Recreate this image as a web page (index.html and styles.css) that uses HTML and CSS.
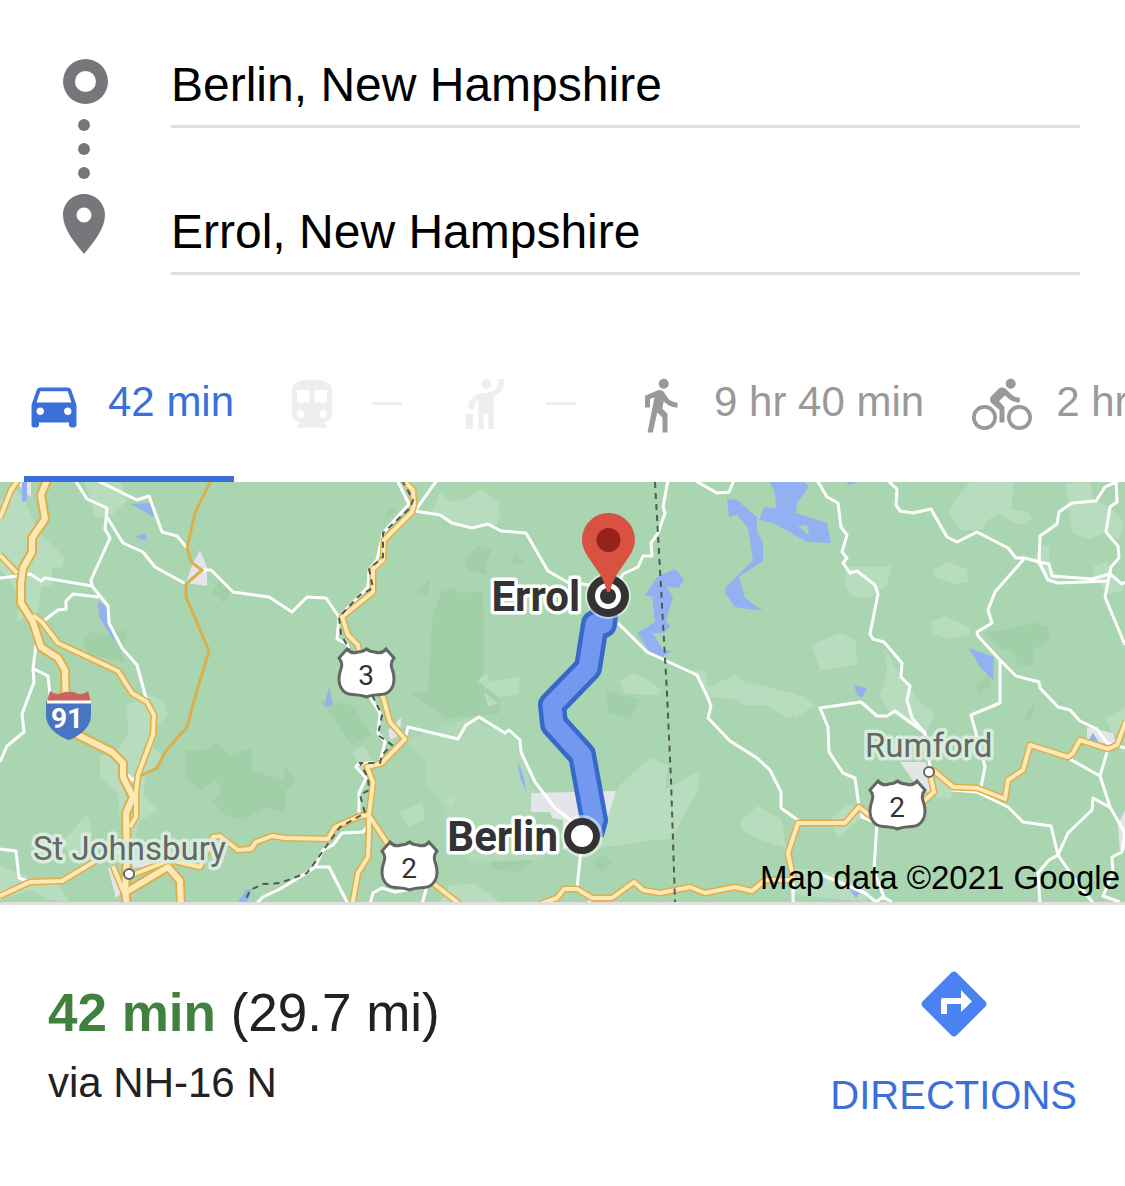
FILE: index.html
```html
<!DOCTYPE html>
<html lang="en">
<head>
    <meta charset="utf-8">
    <meta name="viewport" content="width=device-width, initial-scale=1">
    <title>Berlin to Errol - directions</title>
    <link rel="stylesheet" href="styles.css">
</head>
<body>
    <form class="search">
        <svg class="stops" viewBox="60 56 50 219" aria-hidden="true">
            <path fill-rule="evenodd" d="M85.500 59a22.500 22.500 0 1 0 0 45a22.500 22.500 0 1 0 0-45zM85.500 71a10.500 10.500 0 1 1 0 21a10.500 10.500 0 1 1 0-21z"/>
            <circle cx="84" cy="125" r="6"/>
            <circle cx="84" cy="149" r="6"/>
            <circle cx="84" cy="173" r="6"/>
            <path fill-rule="evenodd" d="M84 194c-11.600 0-21 9.300-21 21c0 14 12 28 21 39c9-11 21-25 21-39c0-11.700-9.400-21-21-21zM84 207.500a7.500 7.500 0 1 1 0 15a7.500 7.500 0 1 1 0-15z"/>
        </svg>
        <div class="fields">
            <input type="text" value="Berlin, New Hampshire" aria-label="Starting point">
            <input type="text" value="Errol, New Hampshire" aria-label="Destination">
        </div>
    </form>

    <nav class="modes">
        <button class="mode active" type="button" aria-label="Driving, 42 min">
            <svg viewBox="0 0 24 24"><path d="M18.920 6.010C18.720 5.420 18.160 5 17.500 5h-11c-.66 0-1.210.42-1.420 1.010L3 12v8c0 .55.45 1 1 1h1c.55 0 1-.45 1-1v-1h12v1c0 .55.45 1 1 1h1c.55 0 1-.45 1-1v-8l-2.080-5.990zM6.500 16c-.83 0-1.500-.67-1.500-1.500S5.670 13 6.500 13s1.500.67 1.500 1.500S7.330 16 6.500 16zm11 0c-.83 0-1.500-.67-1.500-1.500s.67-1.500 1.500-1.500 1.500.67 1.500 1.500-.67 1.500-1.500 1.500zM5 11l1.500-4.500h11L19 11H5z"/></svg>
            <span>42 min</span>
        </button>
        <button class="mode off" type="button" aria-label="Transit">
            <svg viewBox="0 0 24 24"><path d="M12 2c-4.420 0-8 .5-8 4v9.500C4 17.430 5.570 19 7.500 19L6 20.500v.5h12v-.5L16.500 19c1.930 0 3.500-1.570 3.500-3.500V6c0-3.500-3.580-4-8-4zM7.500 17c-.83 0-1.500-.67-1.500-1.500S6.670 14 7.500 14s1.500.67 1.500 1.500S8.330 17 7.500 17zm3.500-6H6V6h5v5zm5.500 6c-.83 0-1.500-.67-1.500-1.500s.67-1.500 1.500-1.500 1.500.67 1.500 1.500-.67 1.500-1.500 1.500zm1.500-6h-5V6h5v5z"/></svg>
            <span>—</span>
        </button>
        <button class="mode off" type="button" aria-label="Ride service">
            <svg viewBox="0 0 60 60"><circle cx="30" cy="9" r="5"/><path d="M42.300 4H48v5C48 14 43 19.500 37.700 21.500V54h-5.400V39h-4.600v15h-5.400V24.500C19.500 26 18 30 18 34h-5.700C12.300 24 19 18.500 28 18C36 17.500 42.300 14 42.300 8zM9.700 39H17v15H9.700z"/></svg>
            <span>—</span>
        </button>
        <button class="mode" type="button" aria-label="Walking, 9 hr 40 min">
            <svg viewBox="0 0 24 24"><path d="M13.500 5.500c1.100 0 2-.9 2-2s-.9-2-2-2-2 .9-2 2 .9 2 2 2zM9.800 8.900L7 23h2.100l1.800-8 2.100 2v6h2v-7.500l-2.100-2 .6-3C14.800 12 16.800 13 19 13v-2c-1.900 0-3.500-1-4.300-2.400l-1-1.600c-.4-.6-1-1-1.700-1-.3 0-.5.1-.8.1L6 8.300V13h2V9.600l1.800-.7"/></svg>
            <span>9 hr 40 min</span>
        </button>
        <button class="mode" type="button" aria-label="Cycling, 2 hr">
            <svg viewBox="0 0 24 24"><path d="M15.500 5.500c1.100 0 2-.9 2-2s-.9-2-2-2-2 .9-2 2 .9 2 2 2zM5 12c-2.800 0-5 2.200-5 5s2.200 5 5 5 5-2.200 5-5-2.200-5-5-5zm0 8.500c-1.900 0-3.500-1.600-3.500-3.500s1.600-3.500 3.500-3.500 3.500 1.600 3.500 3.500-1.600 3.500-3.500 3.500zm5.800-10l2.400-2.400.8.8c1.300 1.300 3 2.100 5.100 2.100V9c-1.500 0-2.700-.6-3.600-1.500l-1.900-1.900c-.5-.4-1-.6-1.600-.6s-1.100.2-1.400.6L7.800 8.400c-.4.4-.6.9-.6 1.400 0 .6.2 1.100.6 1.400L11 14v5h2v-6.200l-2.200-2.300zM19 12c-2.800 0-5 2.200-5 5s2.200 5 5 5 5-2.200 5-5-2.200-5-5-5zm0 8.500c-1.900 0-3.500-1.600-3.500-3.500s1.600-3.500 3.500-3.500 3.500 1.600 3.500 3.500-1.600 3.500-3.500 3.500z"/></svg>
            <span>2 hr</span>
        </button>
    </nav>

    <div class="map">
        <svg viewBox="0 482 1125 420">
            <defs>
                <path id="us" d="M9 0C12 4 16 4.500 20 3C23 3 26 2 28.500 0C31 2 34 3 37 3C41 4.500 45 4 48 0L56 9C52 14 53 17 55 23C58 34 54 45 43 45.500C37 46 32 46 28.500 48C25 46 20 46 14 45.500C3 45 -1 34 2 23C4 17 5 14 1 9Z"/>
                <!-- drawn twice: casing first, then the lighter centre -->
                <g id="freeway">
                    <path d="M47 480L41 495L45 519L32 538L32 552L23 568L21 583L21 603L33 622L41 647L58 658L65 670L66 725L78 735L112 752L123 763L123 777L133 797L126 813L127 857L125 890L127 906"/>
                    <path d="M126 892L168 867L180 881L181 906"/>
                </g>
                <g id="highway">
                    <path d="M18 480L11 490L0 518M0 555L17 573M33 615L42 622L58 643L118 671L132 693L147 702L154 715L153 735L138 775L136 793L136 817L130 827"/>
                    <path d="M0 896L30 882L62 881L97 860L127 848M113 866L124 893M127 877L170 860L200 867L213 837L220 836L238 850L251 849L256 842L272 836L285 838L328 839L335 827L360 816L369 815"/>
                    <path d="M403 480L413 490L414 505L412 512L384 540L383 560L373 569L373 592L342 617L348 635L358 645L360 660L378 690L383 697L390 722L405 739L382 763L367 767L373 782L369 815L369 835L368 857L358 873L352 906M370 817L387 843L433 883L462 906"/>
                    <path d="M540 904L557 898L564 889L577 889L592 898L612 898L634 882L643 890L660 893L690 887L705 893L735 887L752 891L765 880L792 880L793 877L788 853L798 823L845 823L859 807L872 817L923 802L934 792L931 778L933 770L953 787L977 788L1005 799L1008 780L1023 770L1030 745L1068 757L1073 753L1080 740L1108 749L1117 745L1126 721"/>
                </g>
            </defs>

            <rect x="0" y="482" width="1125" height="420" fill="#a9d5b0"/>

            <g class="forest">
                <path d="M441 592L452 588L462 593L483 592L484 690L500 688L499 714L445 718L412 694L428 690L432 620Z"/>
                <path d="M465 558L478 545L492 550L485 564L487 575L467 570ZM509 564L516 556L526 563ZM418 592L430 578L428 596Z"/>
                <path d="M185 750L205 750L216 741L230 755L252 748L252 770L285 782L285 812L265 808L242 820L225 815L212 802L222 790L215 778L208 785L200 790L186 777Z"/>
                <path d="M82 643L90 631L102 636L127 630L121 652L125 662L90 655ZM212 593L220 578L232 590L224 603Z"/>
                <path d="M984 632L1020 627L1032 622L1048 627L1049 640L1032 650L1035 665L1018 665L1015 653L1000 648ZM977 685L990 672L990 685L978 693Z"/>
                <path d="M387 510L398 508L384 522ZM285 765L296 782L284 792ZM605 690L640 700L630 720L608 712ZM1022 722L1036 700L1032 718Z"/>
                <path d="M593 863L605 855L612 862L603 874ZM490 855L515 846L535 860L520 872L493 870ZM320 700L352 705L372 735L352 745L340 728Z"/>
            </g>
            <path d="M405 740L440 728L470 718L505 733L520 742L530 785L556 812L535 815L545 860L470 862L450 840L440 800L425 785L425 760Z" fill="#b1d9b8"/>
            <g class="meadow">
                <path d="M0 500L17 490L25 500L37 530L65 558L62 568L52 567L52 585L42 587L37 613L16 622L20 600L10 580L0 570ZM85 482L120 482L127 500L112 515L95 518L91 500Z"/>
                <path d="M127 705L150 695L165 702L168 715L158 725L153 748L165 757L145 778L144 796L158 810L138 822L132 860L120 820L118 795L100 775L100 755L118 750L128 735Z"/>
                <path d="M62 842L87 815L92 830L90 850L70 855ZM0 866L25 875L35 885L55 880L70 902L50 900L30 890L0 900Z"/>
                <path d="M432 511L440 493L452 502L464 500L482 489L498 502L501 516L496 525L472 528L452 523Z"/>
                <path d="M352 752L364 745L372 762L362 775ZM443 802L455 796L453 807ZM400 812L422 802L425 820L408 827Z"/>
                <path d="M620 680L633 674L645 678L662 690L658 695L625 694ZM690 670L706 672L708 687L735 675L745 683L760 685L805 697L815 705L788 718L766 705L742 700L710 697Z"/>
                <path d="M811 645L840 633L856 640L857 665L820 670ZM845 567L885 567L892 563L887 585L870 598L852 596L845 585ZM933 570L948 562L967 569L968 582L955 584L935 577ZM930 622L945 616L970 628L969 634L950 639L933 634Z"/>
                <path d="M970 482L1013 482L1012 510L1027 511L1032 518L1026 525L1016 524L998 513L986 522L982 530L960 530L948 512L955 500Z"/>
                <path d="M1065 484L1090 482L1094 500L1110 507L1124 522L1119 540L1106 532L1090 539L1073 534L1069 510ZM1094 566L1108 562L1115 580L1125 590L1108 594L1094 576ZM1040 545L1050 546L1049 565L1060 580L1048 580L1034 560Z"/>
                <path d="M884 648L894 665L918 700L935 715L925 735L890 712L880 697L887 672ZM740 690L790 692L815 705L795 718L785 705L740 705Z"/>
                <path d="M740 820L758 806L782 820L786 848L760 840L742 830ZM830 820L848 805L870 812L850 827L838 838ZM1105 718L1125 708L1125 735L1112 733ZM790 868L830 872L870 890L865 902L790 894Z"/>
                <path d="M606 812L620 785L650 758L668 765L665 790L700 770L698 790L672 838L640 842L600 848ZM450 885L475 884L500 902L440 902ZM935 770L955 788L950 799L936 798ZM478 681L486 673L491 682L520 676L518 694L498 697ZM484 692L498 703L488 707Z"/>
            </g>
            <g class="town">
                <path d="M200 550L207 567L207 586L186 583L192 565ZM17 482L31 482L31 497L24 492ZM108 868L115 867L121 893L116 898Z"/>
                <path d="M531 793L616 791L602 835L563 850L563 820L552 818L550 812L531 812ZM401 718L400 735L390 740L388 730Z"/>
                <path d="M900 762L925 762L932 773L935 790L922 793ZM1087 727L1113 733L1117 745L1102 743L1087 740ZM1125 810L1118 825L1120 850L1125 850ZM130 860L165 855L150 866L134 868Z"/>
            </g>
            <g class="water">
                <path d="M131 504L150 503L154 517ZM135 537L145 533L147 541ZM98 601L107 607L109 623L116 643L99 617ZM22 482L27 482L27 501L22 502Z"/>
                <path fill-rule="evenodd" d="M770 482L805 482L809 487L797 503L796 513L827 523L831 543L807 542L773 523L759 520L764 507L776 508L775 493ZM798 526L807 525L809 536Z"/>
                <path d="M727 499L737 500L757 517L757 530L763 543L763 561L739 577L745 598L763 611L735 607L725 593L726 587L753 560L748 528L737 515L729 517Z"/>
                <path d="M657 577L675 569L684 579L679 588L667 587L673 598L666 620L670 627L663 633L653 633L663 650L672 651L662 657L650 652L637 633L655 622L652 597L645 595Z"/>
                <path d="M969 648L994 657L993 680L980 667ZM854 685L867 688L862 698L857 695ZM329 687L333 705L324 707ZM517 761L523 773L527 793L521 780ZM252 889L246 890L238 902L247 902ZM1093 733L1099 742L1088 741ZM848 888L860 893L856 898ZM846 482L858 482L849 485Z"/>
            </g>

            <g class="road">
                <path d="M75 480L87 499L107 508L105 529L110 538L91 580L92 586L108 606L109 623L122 648L137 665L147 702M107 517L123 543L143 552L155 567L186 584"/>
                <path d="M96 480L137 500L149 496L162 532L177 536L187 548M0 578L17 576L30 574L41 581L45 578L92 586M42 622L58 610L66 609L66 601L73 594L99 597"/>
                <path d="M36 645L33 669L34 682L22 714L24 732L7 746L0 762M34 669L48 676L50 695M202 570L211 570L233 592L269 597L292 612L307 597L326 598L339 617"/>
                <path d="M397 480L409 504L383 533L377 560L369 570L368 587L339 617L337 639L347 644L352 655M437 480L415 511L440 515L452 523L472 528L488 524L501 531L526 533L548 571L567 582L590 585"/>
                <path d="M370 697L380 713L378 733L385 742L380 762L358 764L356 767L366 778L359 793L359 815M370 823L363 832L342 833L333 845L323 850L315 867L308 872L280 889L263 897L256 904M315 867L329 867L348 904"/>
                <path d="M405 739L408 727L458 739L466 725L479 717L505 733L509 730L520 740L521 752L535 782L555 808L573 822M581 850L577 888M370 904L373 893L382 888L395 892L412 889M422 904L427 886M590 898L590 904"/>
                <path d="M0 849L16 851L19 878L30 882M128 775L132 780L138 776"/>
                <path d="M668 480L663 507L665 513L658 533L651 543L652 556L643 556L638 567L623 574L618 583M694 480L717 493L729 492L734 480M618 623L647 652L697 675L708 698L711 706L708 718L730 741L757 758L770 770L781 792L781 808L799 821"/>
                <path d="M817 480L827 497L838 503L841 527L847 535L842 552L847 558L843 563L850 573L857 571L875 585L878 594L870 634L873 639L884 642L902 663L901 677L910 686L907 700L912 718L925 733L930 767"/>
                <path d="M887 480L897 489L896 505L900 511L913 513L931 509L947 537L957 542L977 532L1008 548L1016 558L1025 558L1039 562L1049 564L1052 576L1092 579L1110 574L1122 584L1125 582M1039 562L1048 580L1058 583L1108 581"/>
                <path d="M1120 480L1105 487L1096 501L1072 503L1059 512L1057 524L1040 536L1039 562M1116 480L1117 502L1110 507L1106 532L1118 546L1119 558L1111 567L1105 597L1125 645"/>
                <path d="M1024 559L995 592L988 610L992 623L977 632L978 636L1000 660L1016 676L1039 682L1040 688L1058 707L1070 710L1080 721L1097 729L1107 743L1125 748M1000 660L1000 703L971 715L977 737L985 767L981 787"/>
                <path d="M859 807L855 778L843 773L829 752L828 727L820 708L861 702L877 716L887 716L895 711L925 733M862 810L862 817L877 823L874 870L885 900M933 772L953 790L977 792L1008 807L1023 822L1051 826L1058 855L1080 887L1094 904"/>
                <path d="M1111 808L1093 798L1092 810L1068 833L1058 855L1049 860L1038 873L1040 904M1068 758L1100 776L1110 807L1125 833L1122 852L1112 857L1113 873L1103 896L1120 902M1108 749L1100 776M793 880L793 904M815 872L865 893L876 902L883 897L892 902"/>
            </g>

            <path d="M211 480L195 513L187 548L191 562L202 570L186 584L186 597L209 651L196 694L187 727L165 752L157 768L140 776" fill="none" stroke="#dab04c" stroke-width="3"/>

            <g class="line">
                <use href="#highway" stroke="#e0ae4b" stroke-width="7"/>
                <use href="#freeway" stroke="#e0ae4b" stroke-width="10"/>
                <use href="#highway" stroke="#fde9b4" stroke-width="4"/>
                <use href="#freeway" stroke="#fde9b4" stroke-width="6"/>
            </g>

            <path class="dash" d="M402 480L413 500L410 508L383 533L383 557L369 569L373 588L360 595L339 617L341 635L350 650M372 695L382 715L378 735L392 745L382 755L380 763L360 763L368 778L369 790L360 795L365 813L340 827L313 865L307 873L280 883L263 884L250 890L245 902"/>
            <path class="dash" d="M655 482L667 693L671 780L675 902"/>

            <g class="line">
                <path d="M605 605L603 624L595 624L588 668L552 705L554 724L582 755L594 820L590 834" stroke="#3669cb" stroke-width="28"/>
                <path d="M605 605L603 624L595 624L588 668L552 705L554 724L582 755L594 820L590 834" stroke="#7299ef" stroke-width="19"/>
            </g>

            <g class="shield">
                <use href="#us" x="338" y="649"/>
                <use href="#us" x="381" y="842"/>
                <use href="#us" x="869" y="781"/>
                <text x="366" y="685">3</text>
                <text x="409" y="878">2</text>
                <text x="897" y="817">2</text>
            </g>

            <path d="M50 691Q56 696 62 693Q66 691 69 692Q72 691 76 693Q82 696 88 691L91 702H47Z" fill="#c9655f"/>
            <path d="M46 701H91V715C91 727 80 736 69 740C57 736 46 727 46 715Z" fill="#4874c2"/>
            <path d="M47 702H91" stroke="#fff" stroke-width="3"/>
            <text class="interstate" x="67" y="728">91</text>

            <circle class="place" cx="129" cy="874" r="5"/>
            <circle class="place" cx="929" cy="772" r="5"/>
            <text class="town-name" x="33" y="860">St Johnsbury</text>
            <text class="town-name" x="865" y="757">Rumford</text>

            <circle cx="582" cy="836" r="21" fill="#fff" opacity=".5"/>
            <circle cx="582" cy="836" r="14.500" fill="#fff" stroke="#333" stroke-width="7"/>
            <circle cx="608" cy="596" r="23" fill="#fff" opacity=".5"/>
            <circle cx="608" cy="596" r="17" fill="#fff" stroke="#333" stroke-width="8"/>
            <circle cx="608" cy="596" r="8" fill="#333"/>
            <path d="M608.500 513C594 513 582 525 582 540C582 557 603 570 607 592H610C614 570 635 557 635 540C635 525 623 513 608.500 513Z" fill="#d95141"/>
            <circle cx="608.500" cy="540" r="12" fill="#97211b"/>
            <text class="stop-name" x="580" y="611">Errol</text>
            <text class="stop-name" x="558" y="851">Berlin</text>
        </svg>
        <p class="credit">Map data ©2021 Google</p>
    </div>

    <div class="summary">
        <div class="trip">
            <p class="duration"><b>42 min</b> (29.7 mi)</p>
            <p class="via">via NH-16 N</p>
        </div>
        <a class="directions" href="#">
            <svg viewBox="0 0 66 66" aria-hidden="true">
                <path d="M30.500 1.500Q33 -0.500 35.500 1.500L64.500 30.500Q66.500 33 64.500 35.500L35.500 64.500Q33 66.500 30.500 64.500L1.500 35.500Q-0.500 33 1.500 30.500Z" fill="#4a82f2"/>
                <path d="M20 43V29Q20 27 22 27H40V19L51 30.500L40 41V33H26V43Z" fill="#fff"/>
            </svg>
            <span>DIRECTIONS</span>
        </a>
    </div>
</body>
</html>
```
FILE: styles.css
```css
* {
    box-sizing: border-box;
    margin: 0;
}

body {
    background: #fff;
    color: #222;
    font-family: "Liberation Sans", Arial, sans-serif;
    overflow-x: hidden;
}

.search {
    display: flex;
    gap: 61px;
    padding: 56px 45px 0 60px;
}

.stops {
    width: 50px;
    height: 219px;
    fill: #75777b;
}

.fields {
    flex: 1;
    display: flex;
    flex-direction: column;
    gap: 75px;
}

.fields input {
    width: 100%;
    height: 72px;
    padding: 0 0 13px;
    border: 0;
    border-bottom: 3px solid #dedee0;
    outline: 0;
    background: none;
    color: #000;
    font: 48px "Liberation Sans", Arial, sans-serif;
}

/* the row runs off the right edge and scrolls */
.modes {
    display: flex;
    gap: 48px;
    padding: 100px 0 0 24px;
    overflow-x: auto;
    scrollbar-width: none;
}

.mode {
    flex: none;
    display: flex;
    align-items: center;
    gap: 24px;
    padding: 0 0 41px;
    border: 0;
    border-bottom: 6px solid transparent;
    background: none;
    color: #999;
    font: 42px "Liberation Sans", Arial, sans-serif;
    white-space: nowrap;
}

.mode svg {
    width: 60px;
    height: 60px;
    fill: currentColor;
}

.mode span {
    padding-bottom: 6px;
}

.active {
    color: #3b70d9;
    border-color: #3b70d9;
}

.off {
    color: #eee;
}

.off span {
    padding: 0 6px 6px;
    font-size: 30px;
    font-weight: 700;
}

.map {
    position: relative;
    border-bottom: 3px solid #e0e0e0;
}

.map svg {
    display: block;
    width: 100%;
}

.map text {
    font-family: Roboto, sans-serif;
}

.forest {
    fill: #a0cfa8;
}

.meadow {
    fill: #b8ddbe;
}

.town {
    fill: #e4e5e9;
}

.water {
    fill: #93b1f2;
}

.road {
    fill: none;
    stroke: #fff;
    stroke-width: 3;
    stroke-linejoin: round;
}

.line {
    fill: none;
    stroke-linejoin: round;
}

.dash {
    fill: none;
    stroke: #4f5b52;
    stroke-width: 2;
    stroke-dasharray: 6 5;
}

.shield use {
    fill: #fff;
    stroke: #646665;
    stroke-width: 3;
}

.shield text {
    fill: #333;
    font-size: 28px;
    text-anchor: middle;
}

.interstate {
    fill: #fff;
    font-size: 28px;
    font-weight: 700;
    text-anchor: middle;
}

.place {
    fill: #fff;
    stroke: #646665;
    stroke-width: 2;
}

.town-name {
    fill: #666;
    stroke: #d7ecdb;
    stroke-width: 7px;
    stroke-linejoin: round;
    paint-order: stroke;
    font-size: 33px;
}

.stop-name {
    fill: #333;
    stroke: #fff;
    stroke-width: 7px;
    stroke-linejoin: round;
    paint-order: stroke;
    font-size: 42px;
    font-weight: 700;
    text-anchor: end;
}

.credit {
    position: absolute;
    right: 5px;
    bottom: 5px;
    color: #000;
    font-size: 33px;
    line-height: 38px;
}

.summary {
    display: flex;
    justify-content: space-between;
    align-items: center;
    padding: 66px 48px;
}

.duration {
    font-size: 53px;
    line-height: 60px;
}

.duration b {
    color: #40813f;
}

.via {
    margin-top: 16px;
    font-size: 42px;
    line-height: 48px;
}

.directions {
    display: flex;
    flex-direction: column;
    align-items: center;
    gap: 34px;
    color: #3b70d9;
    font-size: 40px;
    line-height: 48px;
    text-decoration: none;
}

.directions svg {
    width: 66px;
    height: 66px;
}
```
